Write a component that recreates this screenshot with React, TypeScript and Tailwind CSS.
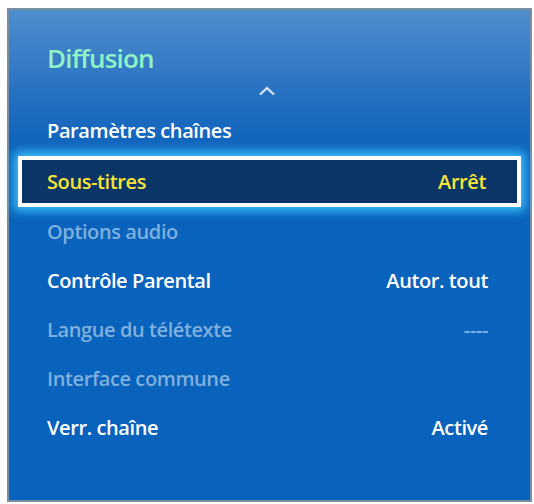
export default function App() {
  const rows = [
    { label: "Options audio", value: "", dim: true },
    { label: "Contrôle Parental", value: "Autor. tout", dim: false },
    { label: "Langue du télétexte", value: "----", dim: true },
    { label: "Interface commune", value: "", dim: true },
    { label: "Verr. chaîne", value: "Activé", dim: false },
  ];

  return (
    <div
      className="w-[534px] h-[504px] bg-white pt-[8px] pl-[7px]"
      style={{ fontFamily: '"Open Sans", "Noto Sans", sans-serif' }}
    >
      <div className="relative w-[525px] h-[494px] border-2 border-[#7b8da1] bg-[#0962bb] bg-gradient-to-b from-[#4e8ecd] via-[#1f6cc0] via-20% to-[#0962bb] to-30%">
        <div className="pl-[38px] pt-[30px] text-[26px] leading-[36px] font-semibold text-[#90f2c4] tracking-[-0.8px]">
          Diffusion
        </div>
        <div className="flex justify-center h-[30px] items-center pr-[6px]">
          <svg width="18" height="10" viewBox="0 0 18 10">
            <path d="M2 8.5 L9 2 L16 8.5" fill="none" stroke="#dce8f6" strokeWidth="2.2" />
          </svg>
        </div>
        <div className="h-[50px] flex items-center pl-[38px] text-[20px] font-semibold text-white tracking-[-0.4px]">
          Paramètres chaînes
        </div>
        <div className="mx-[9px] h-[51px] border-4 border-white bg-[#0b3467] shadow-[0_0_10px_4px_#3cc4ff] flex items-center justify-between pl-[25px] pr-[31px] text-[20px] font-semibold text-[#f6e437] tracking-[-0.4px]">
          <span>Sous-titres</span>
          <span>Arrêt</span>
        </div>
        {rows.map((r) => (
          <div
            key={r.label}
            className={
              "h-[49px] flex items-center justify-between pl-[38px] pr-[42px] text-[20px] font-semibold tracking-[-0.4px] " +
              (r.dim ? "text-[#7fb0de]" : "text-white")
            }
          >
            <span>{r.label}</span>
            <span>{r.value}</span>
          </div>
        ))}
      </div>
    </div>
  );
}
